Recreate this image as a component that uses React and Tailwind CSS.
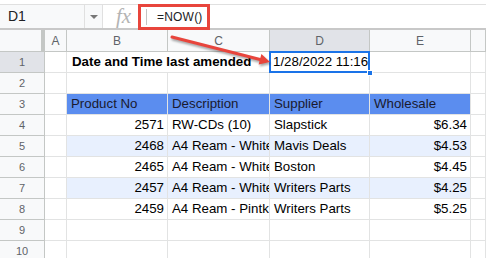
import React from "react";

const W = ["w-[45px]", "w-[22px]", "w-[101px]", "w-[102px]", "w-[100px]", "w-[101px]", "flex-1"];

const rows = [
  { n: "2468", d: "A4 Ream - White", s: "Mavis Deals", w: "$4.53", band: true },
  { n: "2465", d: "A4 Ream - White", s: "Boston", w: "$4.45", band: false },
  { n: "2457", d: "A4 Ream - White", s: "Writers Parts", w: "$4.25", band: true },
  { n: "2459", d: "A4 Ream - Pintk", s: "Writers Parts", w: "$5.25", band: false },
];

function RowHead({ label, selected }) {
  return (
    <div
      className={`${W[0]} shrink-0 h-full flex items-center justify-center border-r border-b border-[#c4c7c5] text-[11px] text-[#5f6368] ${
        selected ? "bg-[#e1e3e8]" : "bg-[#f8f9fa]"
      }`}
    >
      {label}
    </div>
  );
}

function Cell({ i, children, className = "", noRight }) {
  return (
    <div
      className={`${W[i]} shrink-0 h-full border-b border-[#e2e3e3] ${
        noRight ? "" : "border-r"
      } flex items-center overflow-hidden whitespace-nowrap ${className}`}
    >
      {children}
    </div>
  );
}

export default function App() {
  return (
    <div
      className="relative w-[486px] h-[258px] overflow-hidden bg-white text-[13.3px] text-black"
      style={{ fontFamily: '"Liberation Sans", Arial, sans-serif' }}
    >
      {/* Formula bar */}
      <div className="h-[4px] bg-white" />
      <div className="h-[24px] flex border-t border-[#e0e0e0] bg-white">
        <div className="w-[84px] shrink-0 bg-[#f8f9fa] flex items-center pl-[8px] text-[14px] text-[#202124]">
          D1
        </div>
        <div className="w-[18px] shrink-0 bg-[#f8f9fa] flex items-center justify-center border-l border-[#e0e0e0]">
          <div className="w-0 h-0 border-l-[4px] border-r-[4px] border-t-[4px] border-l-transparent border-r-transparent border-t-[#777]" />
        </div>
        <div className="w-px h-full bg-[#e0e0e0]" />
        <div
          className="w-[43px] shrink-0 flex items-center pl-[13px] text-[21px] italic text-[#b4b4b4]"
          style={{ fontFamily: '"Liberation Serif", "Times New Roman", serif' }}
        >
          fx
        </div>
        <div className="w-px h-[16px] self-center bg-[#c4c4c4]" />
        <div className="flex items-center pl-[10px] text-[12px] text-[#202124] tracking-[0.2px]">
          =NOW()
        </div>
      </div>

      {/* Column header row */}
      <div className="h-[24px] flex border-t-2 border-[#c8c8c8] bg-[#f8f9fa] text-[12px] text-[#5f6368]">
        <div className={`${W[0]} shrink-0 h-full border-r-4 border-b border-[#c4c7c5] bg-[#f8f9fa]`} />
        {["A", "B", "C", "D", "E", ""].map((l, k) => (
          <div
            key={k}
            className={`${W[k + 1]} shrink-0 h-full flex items-center justify-center border-r border-b border-[#c4c7c5] ${
              l === "D" ? "bg-[#e1e3e8]" : "bg-[#f8f9fa]"
            }`}
          >
            {l}
          </div>
        ))}
      </div>

      {/* Row 1 */}
      <div className="h-[21px] flex">
        <RowHead label="1" selected />
        <Cell i={1} />
        <Cell i={2} noRight className="overflow-visible pl-[5px] font-bold">
          Date and Time last amended
        </Cell>
        <Cell i={3} />
        <Cell i={4} className="relative overflow-visible pl-[3px]">
          <span className="relative z-10">1/28/2022 11:16</span>
          <div className="absolute left-[-1px] top-[-1px] right-[-1px] bottom-[-1px] border-2 border-[#1a73e8]" />
          <div className="absolute right-[-4px] bottom-[-4px] w-[6px] h-[6px] bg-[#1a73e8] border border-white z-20" />
        </Cell>
        <Cell i={5} />
        <Cell i={6} />
      </div>

      {/* Row 2 */}
      <div className="h-[21px] flex">
        <RowHead label="2" />
        <Cell i={1} />
        <Cell i={2} />
        <Cell i={3} />
        <Cell i={4} />
        <Cell i={5} />
        <Cell i={6} />
      </div>

      {/* Row 3 header */}
      <div className="h-[21px] flex">
        <RowHead label="3" />
        <Cell i={1} />
        <Cell i={2} className="bg-[#5b8def] border-[#5283e0] pl-[4px] text-[#1a1a2e]">Product No</Cell>
        <Cell i={3} className="bg-[#5b8def] border-[#5283e0] pl-[4px] text-[#1a1a2e]">Description</Cell>
        <Cell i={4} className="bg-[#5b8def] border-[#5283e0] pl-[4px] text-[#1a1a2e]">Supplier</Cell>
        <Cell i={5} className="bg-[#5b8def] border-[#5283e0] pl-[4px] text-[#1a1a2e]">Wholesale</Cell>
        <Cell i={6} />
      </div>

      {/* Row 4 */}
      <div className="h-[21px] flex">
        <RowHead label="4" />
        <Cell i={1} />
        <Cell i={2} className="justify-end pr-[3px]">2571</Cell>
        <Cell i={3} className="pl-[4px]">RW-CDs (10)</Cell>
        <Cell i={4} className="pl-[4px]">Slapstick</Cell>
        <Cell i={5} className="justify-end pr-[3px]">$6.34</Cell>
        <Cell i={6} />
      </div>

      {rows.map((r, idx) => (
        <div key={idx} className="h-[21px] flex">
          <RowHead label={String(idx + 5)} />
          <Cell i={1} />
          <Cell i={2} className={`justify-end pr-[3px] ${r.band ? "bg-[#e8f0fe]" : ""}`}>{r.n}</Cell>
          <Cell i={3} className={`pl-[4px] ${r.band ? "bg-[#e8f0fe]" : ""}`}>{r.d}</Cell>
          <Cell i={4} className={`pl-[4px] ${r.band ? "bg-[#e8f0fe]" : ""}`}>{r.s}</Cell>
          <Cell i={5} className={`justify-end pr-[3px] ${r.band ? "bg-[#e8f0fe]" : ""}`}>{r.w}</Cell>
          <Cell i={6} />
        </div>
      ))}

      {["9", "10"].map((l) => (
        <div key={l} className="h-[21px] flex">
          <RowHead label={l} />
          <Cell i={1} />
          <Cell i={2} />
          <Cell i={3} />
          <Cell i={4} />
          <Cell i={5} />
          <Cell i={6} />
        </div>
      ))}

      {/* Annotation: red box around formula */}
      <div className="absolute left-[138px] top-[4px] w-[72px] h-[26px] border-[3px] border-[#e8453c]" />

      {/* Annotation: arrow */}
      <svg
        className="absolute left-0 top-0 drop-shadow-[1px_2px_1px_rgba(0,0,0,0.35)]"
        width="486"
        height="258"
        viewBox="0 0 486 258"
      >
        <line x1="172" y1="37" x2="262" y2="60" stroke="#e8453c" strokeWidth="3" strokeLinecap="round" />
        <polygon points="270,62 258.6,64.6 261.4,54.0" fill="#e8453c" />
      </svg>
    </div>
  );
}
